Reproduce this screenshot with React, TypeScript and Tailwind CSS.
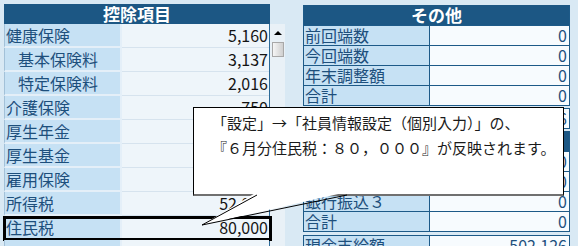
import React from "react";

const jp = { fontFamily: '"Noto Sans CJK JP", "Noto Sans", sans-serif' };

const leftRows: { label: string; value: string; indent?: boolean; boxed?: boolean }[] = [
  { label: "健康保険", value: "5,160" },
  { label: "基本保険料", value: "3,137", indent: true },
  { label: "特定保険料", value: "2,016", indent: true },
  { label: "介護保険", value: "750" },
  { label: "厚生年金", value: "9,150" },
  { label: "厚生基金", value: "0" },
  { label: "雇用保険", value: "3,020" },
  { label: "所得税", value: "52,060" },
  { label: "住民税", value: "80,000", boxed: true },
  { label: "", value: "" },
];

function RightRow({ label, value }: { label: string; value: string }) {
  return (
    <div className="flex h-[20px] border-t border-[#1d5a88]">
      <div className="w-[126px] bg-[#c6e1f4] border-r border-[#1d5a88] text-[16px] leading-[19px] text-[#1d4f7c] pl-[1px] whitespace-nowrap">
        {label}
      </div>
      <div className="flex-1 bg-[#f7fbfe] text-[16px] leading-[19px] text-[#1d4f7c] text-right pr-[2px]">
        {value}
      </div>
    </div>
  );
}

function RightHeader({ title }: { title: string }) {
  return (
    <div className="h-[20px] bg-[#1c5784] text-white font-bold text-[17px] leading-[20px] text-center">
      {title}
    </div>
  );
}

export default function App() {
  return (
    <div
      className="relative w-[578px] h-[246px] overflow-hidden bg-[#d9e9f4] flex"
      style={jp}
    >
      {/* Left table */}
      <div className="ml-[4px] mt-[4px] w-[266px] flex flex-col">
        <div className="h-[20px] bg-[#1c5784] text-white font-bold text-[17px] leading-[20px] text-center">
          控除項目
        </div>
        <div className="border-r border-[#2c6a98]">
          {leftRows.map((r, i) => (
            <div key={i} className="relative flex h-[24px]">
              <div
                className={`w-[118px] bg-[#c6e1f4] border-l border-[#a3c1d8] border-b-2 border-b-[#e4eff8] border-r-2 border-r-[#e4eff8] text-[16px] leading-[22px] text-[#1d4f7c] whitespace-nowrap ${
                  r.indent ? "pl-[13px]" : "pl-[1px]"
                }`}
              >
                {r.label}
              </div>
              <div className="flex-1 bg-[#eef5fa] border-b border-[#d6e3ee] text-[16px] leading-[22px] text-[#141414] text-right pr-[1px]">
                {r.value}
              </div>
              {r.boxed && (
                <div className="absolute left-[-1px] right-[-3px] top-[0px] bottom-[-1px] border-[3px] border-black" />
              )}
            </div>
          ))}
        </div>
      </div>

      {/* Scrollbar */}
      <div className="mt-[24px] w-[15px] bg-[#e9f1f7] flex flex-col items-center">
        <div className="mt-[7px] w-0 h-0 border-l-[4px] border-r-[4px] border-b-[4px] border-l-transparent border-r-transparent border-b-black" />
        <div className="mt-[7px] w-[12px] h-[15px] border border-[#a8a8a8] bg-gradient-to-r from-[#f6f6f6] to-[#cfcfcf]" />
      </div>

      {/* Right tables */}
      <div className="ml-[18px] mt-[5px] w-[267px] flex flex-col">
        <div className="border-x border-b border-[#1d5a88]">
          <RightHeader title="その他" />
          <RightRow label="前回端数" value="0" />
          <RightRow label="今回端数" value="0" />
          <RightRow label="年末調整額" value="0" />
          <RightRow label="合計" value="0" />
        </div>
        <div className="mt-[2px] border-x border-b border-[#1d5a88]">
          <RightRow label="差引支給額" value="502,126" />
        </div>
        <div className="mt-[2px] border-x border-b border-[#1d5a88]">
          <RightHeader title="振込" />
          <RightRow label="銀行振込１" value="0" />
          <RightRow label="銀行振込２" value="0" />
          <RightRow label="銀行振込３" value="0" />
          <RightRow label="合計" value="0" />
        </div>
        <div className="mt-[3px] border-x border-b border-[#1d5a88]">
          <RightRow label="現金支給額" value="502,126" />
        </div>
      </div>

      {/* Callout */}
      <div className="absolute left-[193px] top-[107px] w-[371px] h-[89px] bg-white border border-black border-b-2 border-b-[#707070] pl-[18px] pt-[2px] text-[15px] leading-[25px] text-[#1a1a1a] whitespace-nowrap">
        <div>「設定」→「社員情報設定（個別入力）」の、</div>
        <div>『６月分住民税：８０，０００』が反映されます。</div>
      </div>
      <svg className="absolute left-0 top-0 pointer-events-none" width="578" height="246">
        <polygon points="257,192 202,225 347,192" fill="white" />
        <line x1="257" y1="195" x2="202" y2="225" stroke="black" strokeWidth="1" />
        <line x1="202" y1="225" x2="347" y2="195" stroke="black" strokeWidth="1" />
      </svg>
    </div>
  );
}
